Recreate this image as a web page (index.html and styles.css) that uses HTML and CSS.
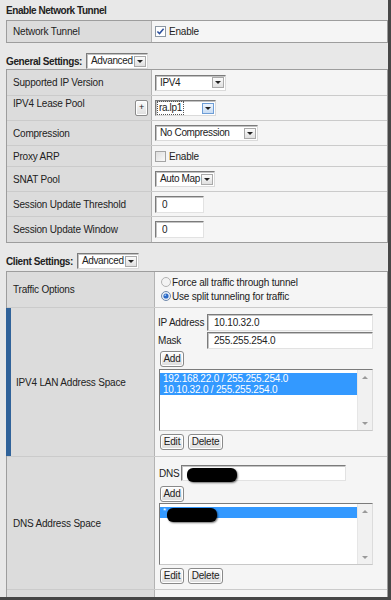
FILE: index.html
```html
<!DOCTYPE html>
<html>
<head>
<meta charset="utf-8">
<title>Network Access Tunnel</title>
<link rel="stylesheet" href="styles.css">
</head>
<body>
<div class="frame">
  <div class="title">Enable Network Tunnel</div>
  <div class="tbl">
    <div class="row h21">
      <div class="lab">Network Tunnel</div>
      <div class="val">
        <svg class="cb" width="11" height="11" viewBox="0 0 11 11"><rect x="0.5" y="0.5" width="10" height="10" fill="#fff" stroke="#8c97a3"/><path d="M2.4 5.4 L4.5 7.6 L8.6 2.8" fill="none" stroke="#2c4f9c" stroke-width="1.5"/></svg>
        <span class="cbtext">Enable</span>
      </div>
    </div>
  </div>

  <div class="bar bar1">
    <span class="bar-label">General Settings:</span>
    <span class="sel w-adv"><span class="stxt">Advanced</span><span class="arr"></span></span>
  </div>

  <div class="tbl">
    <div class="row h25">
      <div class="lab">Supported IP Version</div>
      <div class="val"><span class="sel w-ipv4"><span class="stxt">IPV4</span><span class="arr"></span></span></div>
    </div>
    <div class="row h24">
      <div class="lab lab-top">
        <span class="lab-text">IPV4 Lease Pool</span>
        <span class="plus">+</span>
      </div>
      <div class="val"><span class="sel w-pool focus"><span class="stxt ftxt">ra.lp1</span><span class="arr"></span></span></div>
    </div>
    <div class="row h24">
      <div class="lab">Compression</div>
      <div class="val"><span class="sel w-comp"><span class="stxt">No Compression</span><span class="arr"></span></span></div>
    </div>
    <div class="row h21">
      <div class="lab">Proxy ARP</div>
      <div class="val">
        <svg class="cb" width="11" height="11" viewBox="0 0 11 11"><defs><linearGradient id="g1" x1="0" y1="0" x2="1" y2="1"><stop offset="0" stop-color="#dcdcdc"/><stop offset="1" stop-color="#fbfbfb"/></linearGradient></defs><rect x="0.5" y="0.5" width="10" height="10" fill="url(#g1)" stroke="#a4a4a4"/></svg>
        <span class="cbtext">Enable</span>
      </div>
    </div>
    <div class="row h24">
      <div class="lab">SNAT Pool</div>
      <div class="val"><span class="sel w-snat"><span class="stxt">Auto Map</span><span class="arr"></span></span></div>
    </div>
    <div class="row h24">
      <div class="lab">Session Update Threshold</div>
      <div class="val"><input class="inp w-small" type="text" value="0"></div>
    </div>
    <div class="row h24">
      <div class="lab">Session Update Window</div>
      <div class="val"><input class="inp w-small" type="text" value="0"></div>
    </div>
  </div>

  <div class="bar bar2">
    <span class="bar-label">Client Settings:</span>
    <span class="sel w-adv"><span class="stxt">Advanced</span><span class="arr"></span></span>
  </div>

  <div class="tbl wide last">
    <div class="row h35">
      <div class="lab">Traffic Options</div>
      <div class="val radios">
        <div class="rline">
          <svg class="rd" width="10" height="10" viewBox="0 0 10 10"><circle cx="5" cy="5" r="4.5" fill="#f3f3f3" stroke="#b2b2b2"/></svg>
          <span>Force all traffic through tunnel</span>
        </div>
        <div class="rline">
          <svg class="rd" width="10" height="10" viewBox="0 0 10 10"><circle cx="5" cy="5" r="4.5" fill="#e9eff7" stroke="#7089ab"/><circle cx="5" cy="5" r="2.6" fill="#2a69c6"/><circle cx="4.3" cy="4.2" r="0.9" fill="#9cc1f0"/></svg>
          <span>Use split tunneling for traffic</span>
        </div>
      </div>
    </div>
    <div class="row h148">
      <div class="lab blue">IPV4 LAN Address Space</div>
      <div class="val stack lan">
        <div class="pair">
          <span class="plabel">IP Address</span>
          <input class="inp w-ip" type="text" value="10.10.32.0">
        </div>
        <div class="pair">
          <span class="plabel">Mask</span>
          <input class="inp w-ip" type="text" value="255.255.254.0">
        </div>
        <div class="btnrow add"><button class="btn w-24">Add</button></div>
        <div class="listbox">
          <div class="items">
            <div class="opt sel-on">192.168.22.0 / 255.255.254.0</div>
            <div class="opt sel-on">10.10.32.0 / 255.255.254.0</div>
          </div>
          <div class="scroll"><span class="up"></span><span class="down"></span></div>
        </div>
        <div class="btnrow edit"><button class="btn w-24">Edit</button><button class="btn w-35">Delete</button></div>
      </div>
    </div>
    <div class="row h132">
      <div class="lab">DNS Address Space</div>
      <div class="val stack dns">
        <div class="pair pdns">
          <span class="plabel dnsl">DNS</span>
          <div class="inp field w-dns"><span class="blob"></span></div>
        </div>
        <div class="btnrow add2"><button class="btn w-24">Add</button></div>
        <div class="listbox lb2">
          <div class="items">
            <div class="opt sel-on"><span class="star">*</span><span class="blob b2"></span></div>
          </div>
          <div class="scroll"><span class="up"></span><span class="down"></span></div>
        </div>
        <div class="btnrow edit"><button class="btn w-24">Edit</button><button class="btn w-35">Delete</button></div>
      </div>
    </div>
    <div class="row h20">
      <div class="lab"></div>
      <div class="val"></div>
    </div>
  </div>
</div>
</body>
</html>
```
FILE: styles.css
```css
* { box-sizing: border-box; }
html, body { margin: 0; padding: 0; }
body {
  font-family: "Liberation Sans", Arial, sans-serif;
  font-size: 10px;
  color: #222;
  letter-spacing: -0.2px;
  background: #e8e8e8;
}
.frame {
  width: 391px;
  height: 600px;
  background: #e8e8e8;
  border-right: 3px solid #474747;
  border-bottom: 3px solid #474747;
  overflow: hidden;
}
.title {
  height: 20px;
  padding: 5px 0 0 6px;
  line-height: 12px;
  font-weight: bold;
  letter-spacing: -0.45px;
}
.tbl {
  margin-left: 6px;
  border: 1px solid #9d9d9d;
}
.tbl.last { border-bottom: 0; }
.row {
  display: grid;
  grid-template-columns: 145px 1fr;
  border-bottom: 1px solid #cbcbcb;
}
.row:last-child { border-bottom: 0; }
.tbl.wide .row { grid-template-columns: 148px 1fr; }
.h20 { height: 20px; }
.h21 { height: 21px; }
.h24 { height: 25px; }
.h25 { height: 26px; }
.h35 { height: 36px; }
.h148 { height: 149px; }
.h132 { height: 133px; }
.lab {
  background: #dcdcdc;
  border-right: 1px solid #b3b3b3;
  padding-left: 6px;
  display: flex;
  align-items: center;
  white-space: nowrap;
}
.lab-top {
  align-items: flex-start;
  justify-content: space-between;
  padding-right: 3px;
}
.lab-text { padding-top: 2px; line-height: 12px; }
.lab.blue {
  margin-left: -1px;
  border-left: 5px solid #31639a;
  padding-left: 5px;
}
.plus {
  align-self: center;
  width: 13px;
  height: 16px;
  border: 1px solid #8c8c8c;
  border-radius: 2px;
  background: linear-gradient(#fcfcfc, #dedede);
  box-shadow: inset 0 0 0 1px #fff;
  display: flex;
  align-items: center;
  justify-content: center;
  font-size: 9px;
  line-height: 1;
  padding-bottom: 1px;
}
.val {
  background: #f5f5f5;
  padding-left: 3px;
  display: flex;
  align-items: center;
  white-space: nowrap;
}
.cb { display: block; flex: none; }
.cbtext { margin-left: 3px; }

.bar {
  display: flex;
  align-items: flex-end;
  gap: 4px;
  padding-left: 6px;
}
.bar1 { height: 26px; }
.bar2 { height: 28px; padding-bottom: 2px; }
.bar-label {
  font-weight: bold;
  letter-spacing: -0.4px;
  line-height: 14px;
}

.sel {
  display: inline-flex;
  align-items: center;
  justify-content: space-between;
  height: 16px;
  background: #fff;
  border: 1px solid;
  border-color: #7b7b7b #dadada #dadada #7b7b7b;
  box-shadow: inset 1px 1px 0 #c2c2c2;
  padding: 0 1px 0 4px;
  line-height: 12px;
}
.stxt { letter-spacing: -0.35px; }
.arr {
  width: 12px;
  height: 11px;
  background: linear-gradient(#fbfbfb, #e0e0e0);
  border: 1px solid #a9a9a9;
  display: flex;
  align-items: center;
  justify-content: center;
  flex: none;
}
.arr::after {
  content: "";
  border-left: 3px solid transparent;
  border-right: 3px solid transparent;
  border-top: 3px solid #222;
}
.sel.focus .arr {
  border-color: #6d9dd6;
  background: linear-gradient(#eef5fd, #c7dcf4);
}
.ftxt { outline: 1px dotted #555; padding: 0 1px; margin-left: -2px; }
.w-adv { width: 62px; }
.w-ipv4 { width: 71px; }
.w-pool { width: 61px; }
.w-comp { width: 103px; }
.w-snat { width: 60px; }

.inp {
  height: 17px;
  border: 1px solid;
  border-color: #7b7b7b #e2e2e2 #e2e2e2 #7b7b7b;
  box-shadow: inset 1px 1px 0 #c4c4c4;
  background: #fff;
  font: inherit;
  letter-spacing: inherit;
  color: #222;
  padding: 0 0 0 6px;
  margin: 0;
  outline: none;
}
.w-small { width: 49px; }
.w-ip { width: 166px; }
.w-dns { width: 165px; height: 16px; }

.radios {
  flex-direction: column;
  align-items: flex-start;
  justify-content: flex-start;
  padding: 3px 0 0 6px;
}
.rline {
  display: flex;
  align-items: center;
  height: 14px;
}
.rd { display: block; margin-right: 1px; }

.stack {
  display: block;
}
.lan { padding: 6px 0 0 3px; }
.dns { padding: 8px 0 0 3px; }
.pair {
  display: flex;
  align-items: center;
  height: 17px;
  margin-bottom: 1px;
}
.plabel { width: 49px; }
.pdns { height: 16px; }
.dnsl { width: 22px; margin-left: 1px; }
.field {
  display: flex;
  align-items: flex-start;
  padding: 2px 0 0 5px;
  overflow: visible;
}
.blob {
  display: inline-block;
  width: 50px;
  height: 14px;
  background: #000;
  border-radius: 6px;
  box-shadow: 1px 1px 2px rgba(0,0,0,0.55);
}

.btnrow { display: flex; gap: 4px; margin-left: 2px; }
.btnrow.add { margin-top: 2px; }
.btnrow.add2 { margin-top: 5px; }
.btnrow.edit { margin-top: 3px; }
.btn {
  height: 16px;
  padding: 0;
  border: 1px solid #8a8a8a;
  border-radius: 3px;
  background: linear-gradient(#fdfdfd, #dcdcdc);
  box-shadow: inset 0 0 0 1px #fff;
  font: inherit;
  letter-spacing: inherit;
  color: #222;
  line-height: 12px;
}
.w-24 { width: 24px; }
.w-35 { width: 35px; }

.listbox {
  display: flex;
  width: 214px;
  height: 62px;
  margin: 2px 0 0 1px;
  background: #fff;
  border: 1px solid;
  border-color: #7b7b7b #dcdcdc #c8c8c8 #7b7b7b;
}
.lb2 { margin-top: 1px; }
.items {
  flex: 1;
  padding-top: 3px;
}
.opt {
  height: 11px;
  line-height: 11px;
  padding-left: 3px;
  white-space: nowrap;
}
.sel-on { background: #3399ff; color: #fff; }
.star { font-size: 8px; vertical-align: top; line-height: 8px; }
.b2 {
  width: 50px;
  height: 14px;
  margin-left: 1px;
  vertical-align: top;
  margin-top: 1px;
}
.scroll {
  width: 15px;
  background: #f1f1f1;
  border-left: 1px solid #e6e6e6;
  display: flex;
  flex-direction: column;
  justify-content: space-between;
  align-items: center;
  padding: 6px 0 5px;
}
.up {
  border-left: 3px solid transparent;
  border-right: 3px solid transparent;
  border-bottom: 3px solid #9a9a9a;
}
.down {
  border-left: 3px solid transparent;
  border-right: 3px solid transparent;
  border-top: 3px solid #9a9a9a;
}
```
